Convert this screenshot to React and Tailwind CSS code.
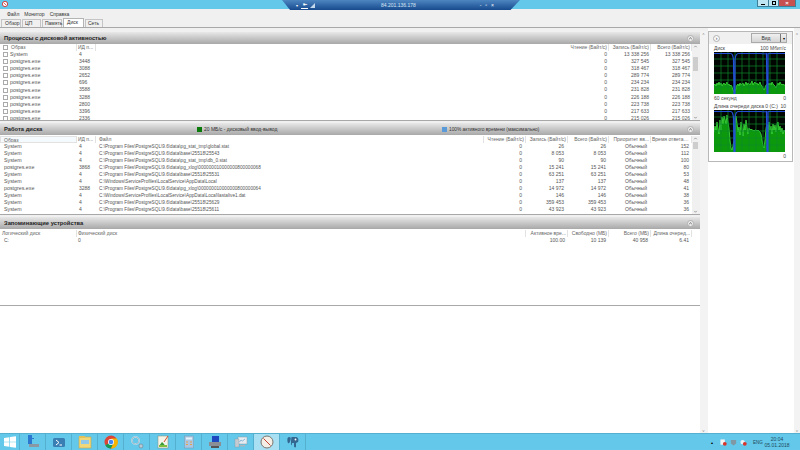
import React from 'react'

const procRows = [
  ['System', '4', '0', '13 338 256', '13 338 256'],
  ['postgres.exe', '3448', '0', '327 545', '327 545'],
  ['postgres.exe', '3088', '0', '318 467', '318 467'],
  ['postgres.exe', '2652', '0', '289 774', '289 774'],
  ['postgres.exe', '696', '0', '234 234', '234 234'],
  ['postgres.exe', '3588', '0', '231 828', '231 828'],
  ['postgres.exe', '3288', '0', '226 188', '226 188'],
  ['postgres.exe', '2800', '0', '223 738', '223 738'],
  ['postgres.exe', '3396', '0', '217 633', '217 633'],
  ['postgres.exe', '2336', '0', '215 026', '215 026'],
]

const diskRows = [
  ['System', '4', 'C:\\Program Files\\PostgreSQL\\9.6\\data\\pg_stat_tmp\\global.stat', '0', '26', '26', '152'],
  ['System', '4', 'C:\\Program Files\\PostgreSQL\\9.6\\data\\base\\25518\\25543', '0', '8 053', '8 053', '112'],
  ['System', '4', 'C:\\Program Files\\PostgreSQL\\9.6\\data\\pg_stat_tmp\\db_0.stat', '0', '90', '90', '100'],
  ['postgres.exe', '3868', 'C:\\Program Files\\PostgreSQL\\9.6\\data\\pg_xlog\\000000010000000800000068', '0', '15 241', '15 241', '80'],
  ['System', '4', 'C:\\Program Files\\PostgreSQL\\9.6\\data\\base\\25518\\25531', '0', '63 251', '63 251', '53'],
  ['System', '4', 'C:\\Windows\\ServiceProfiles\\LocalService\\AppData\\Local', '0', '137', '137', '48'],
  ['postgres.exe', '3288', 'C:\\Program Files\\PostgreSQL\\9.6\\data\\pg_xlog\\000000010000000800000064', '0', '14 972', '14 972', '41'],
  ['System', '4', 'C:\\Windows\\ServiceProfiles\\LocalService\\AppData\\Local\\lastalive1.dat', '0', '146', '146', '38'],
  ['System', '4', 'C:\\Program Files\\PostgreSQL\\9.6\\data\\base\\25518\\25629', '0', '359 453', '359 453', '36'],
  ['System', '4', 'C:\\Program Files\\PostgreSQL\\9.6\\data\\base\\25518\\25611', '0', '43 923', '43 923', '36'],
]

const green1 = [33, 32, 34, 31, 33, 30, 33, 31, 34, 32, 31, 33, 32, 30, 33, 32, 34, 33, 35, 38, 40, 40, 36, 33, 32, 34, 31, 33, 32, 31, 34, 32, 30, 33, 31, 32, 33, 31, 29, 33, 31, 30, 32, 31, 33, 32, 30, 33, 34, 36, 38, 36, 33, 32, 31, 33, 31, 33, 30, 32, 33, 34, 36, 33, 31, 33, 30, 32, 33, 32, 33, 33]
const green2 = [22, 16, 20, 12, 18, 24, 10, 20, 7, 14, 6, 9, 14, 5, 12, 18, 30, 38, 40, 36, 30, 14, 6, 13, 22, 17, 25, 12, 18, 26, 14, 20, 10, 17, 24, 18, 20, 19, 20, 20, 21, 20, 20, 21, 20, 21, 22, 24, 30, 36, 38, 30, 18, 14, 22, 12, 20, 16, 24, 14, 20, 15, 22, 14, 12, 20, 16, 22, 18, 24, 20, 22]

function Graph({ data, className }) {
  const points = data.map((v, i) => `${i},${v}`).join(' ')
  const vLines = [7, 14, 21, 28, 35, 42, 49, 56, 63]
  const hLines = [7, 14, 21, 28, 35]
  return (
    <svg viewBox="0 0 71 42" className={className}>
      <rect width="71" height="42" fill="#020602" />
      <polygon points={`0,42 ${points} 71,42`} fill="#0c9a0c" />
      <polyline points={points} fill="none" stroke="#3fe03f" strokeWidth="0.8" />
      {vLines.map(x => <line key={x} x1={x} y1="0" x2={x} y2="42" stroke="#0c8a2c" strokeWidth="0.7" />)}
      {hLines.map(y => <line key={y} x1="0" y1={y} x2="71" y2={y} stroke="#0c8a2c" strokeWidth="0.7" />)}
      <path d="M0 1.5H17Q19 2 19.5 8L20 42M21 42L21 8Q21.5 2 24 1.5H47Q51 2 52.5 1.5L53 42M54 42L54 1.5H71" fill="none" stroke="#2450d8" strokeWidth="1.2" />
    </svg>
  )
}

function Chevron() {
  return (
    <span className="flex w-[7px] h-[7px] items-center justify-center rounded-full bg-[#ececec] border border-[#b0b0b0]">
      <svg viewBox="0 0 6 6" className="w-[5px] h-[5px]">
        <path d="M1.5 3.6L3 2.2L4.5 3.6" fill="none" stroke="#333" strokeWidth="0.9" />
      </svg>
    </span>
  )
}

function SectionHeader({ title, children }) {
  return (
    <div className="relative flex h-[12px] shrink-0 items-center bg-gradient-to-b from-[#e8e8e8] to-[#a8a8a8] pl-[4px] pr-[6px]">
      <span className="text-[5.8px] font-bold text-[#222]">{title}</span>
      {children}
      <span className="ml-auto"><Chevron /></span>
    </div>
  )
}

function Head({ children, className = '' }) {
  return <div className={`truncate border-r border-[#e2e2e2] px-[1px] ${className}`}>{children}</div>
}

function Scrollbar({ thumb }) {
  return (
    <div className="flex w-[8px] shrink-0 flex-col items-center justify-between bg-[#f0f0f0] pr-[1px]">
      <svg viewBox="0 0 6 5" className="w-[5px] h-[5px]"><path d="M1.5 3.4L3 1.8L4.5 3.4" fill="none" stroke="#666" strokeWidth="0.7" /></svg>
      <div className="w-full flex-1 px-[1px]">
        <div className={`w-full bg-[#cdcdcd] ${thumb}`} />
      </div>
      <svg viewBox="0 0 6 5" className="w-[5px] h-[5px]"><path d="M1.5 1.8L3 3.4L4.5 1.8" fill="none" stroke="#666" strokeWidth="0.7" /></svg>
    </div>
  )
}

function TaskIcon({ children, active }) {
  return (
    <div className={`flex h-full w-[26px] shrink-0 items-center justify-center border-r border-[#55b0d0] ${active ? 'bg-[#a9dff2]' : ''}`}>
      <svg viewBox="0 0 14 14" className="w-[14px] h-[14px]">{children}</svg>
    </div>
  )
}

export default function App() {
  return (
    <div className="flex h-screen w-screen flex-col overflow-hidden bg-white font-['Liberation_Sans',Arial,sans-serif] text-[5px] leading-[7px] text-[#555]">
      {/* заголовок окна */}
      <div className="relative flex h-[9px] shrink-0 items-start bg-[#63c8ea]">
        <svg viewBox="0 0 8 8" className="ml-[2px] mt-[1px] w-[6px] h-[6px]">
          <circle cx="4" cy="4" r="3.5" fill="#fff" stroke="#c33" strokeWidth="1.2" />
          <path d="M2.5 2.5L5.5 5.5" stroke="#c33" />
        </svg>
        <div className="absolute left-[282px] top-0 flex h-[10px] w-[238px] items-center bg-gradient-to-b from-[#4d86c0] to-[#174a8e] pl-[14px] pr-[26px] text-white [clip-path:polygon(0_0,100%_0,96%_100%,3.4%_100%)]">
          <span className="text-[4px]">▾</span>
          <span className="ml-[3px] flex h-[7px] w-[7px] items-center justify-center border-b border-white text-[5px] font-bold">⇤</span>
          <svg viewBox="0 0 6 6" className="ml-[2px] w-[5px] h-[5px]"><path d="M0 6L6 0V6Z" fill="#c4d8ec" /></svg>
          <span className="ml-[66px] text-[#d9e8f6]">84.201.136.178</span>
          <span className="ml-auto flex items-center gap-[4px] text-[5px] leading-none"><span>-</span><span>▫</span><span>×</span></span>
        </div>
        <div className="ml-auto mr-[4px] flex h-[7px] items-stretch border border-t-0 border-[#3c7f98] text-[#111]">
          <div className="flex w-[10px] items-center justify-center bg-[#bfe6f3]"><div className="mt-[2px] h-[1px] w-[4px] bg-black" /></div>
          <div className="flex w-[11px] items-center justify-center border-x border-[#3c7f98] bg-[#bfe6f3]"><div className="h-[4px] w-[4px] border border-black" /></div>
          <div className="flex w-[16px] items-center justify-center bg-[#c75050] text-[6px] font-bold leading-none text-white">×</div>
        </div>
      </div>

      {/* меню */}
      <div className="flex h-[10px] shrink-0 items-center gap-[5px] bg-[#f0f0f0] pl-[7px] text-[#333]">
        <span>Файл</span><span>Монитор</span><span>Справка</span>
      </div>

      {/* вкладки */}
      <div className="flex h-[9px] shrink-0 items-end gap-[1px] border-b border-[#a8a8a8] bg-[#f0f0f0] pl-[1px] text-[#333]">
        <div className="h-[8px] w-[20px] border border-b-0 border-[#c4c4c4] pl-[3px]">Обзор</div>
        <div className="h-[8px] w-[19px] border border-b-0 border-[#c4c4c4] pl-[2px]">ЦП</div>
        <div className="h-[8px] w-[20px] border border-b-0 border-[#c4c4c4] pl-[2px]">Память</div>
        <div className="h-[9px] w-[21px] border border-b-0 border-[#b4b4b4] bg-white pl-[3px]">Диск</div>
        <div className="h-[8px] w-[18px] border border-b-0 border-[#c4c4c4] pl-[2px]">Сеть</div>
      </div>

      <div className="flex min-h-0 flex-1 bg-[#f0f0f0]">
        {/* левая часть */}
        <div className="flex w-[700px] shrink-0 flex-col pt-[4px]">
          <section className="flex h-[89px] shrink-0 flex-col border-b border-[#a8a8a8] bg-white">
            <SectionHeader title="Процессы с дисковой активностью" />
            <div className="flex min-h-0 flex-1">
              <div className="min-w-0 flex-1 overflow-hidden">
                <div className="grid h-[7px] grid-cols-[77px_19px_1fr_42px_42px_41px] text-[#666]">
                  <Head className="flex items-center pl-[3px]"><span className="mr-[3px] inline-block h-[5px] w-[5px] border border-[#aaa]" />Образ</Head>
                  <Head>ИД п...</Head>
                  <div />
                  <Head className="text-right">Чтение (Байт/с)</Head>
                  <Head className="text-right">Запись (Байт/с)</Head>
                  <Head className="text-right">Всего (Байт/с)</Head>
                </div>
                {procRows.map((r, i) => (
                  <div key={i} className="grid h-[7.1px] grid-cols-[77px_19px_1fr_42px_42px_41px]">
                    <div className="flex items-center pl-[3px] text-[5.3px]"><span className="mr-[2px] inline-block h-[5px] w-[5px] border border-[#aaa]" />{r[0]}</div>
                    <div className="pl-[2px]">{r[1]}</div>
                    <div />
                    <div className="pr-[2px] text-right">{r[2]}</div>
                    <div className="pr-[2px] text-right">{r[3]}</div>
                    <div className="pr-[2px] text-right">{r[4]}</div>
                  </div>
                ))}
              </div>
              <Scrollbar thumb="mt-[8px] h-[14px]" />
            </div>
          </section>

          <section className="mt-[2px] flex h-[92px] shrink-0 flex-col border-b border-[#a8a8a8] bg-white">
            <SectionHeader title="Работа диска">
              <span className="absolute left-[197px] top-[3px] flex items-center text-[#333]">
                <span className="mr-[2px] h-[5px] w-[5px] bg-[#0a7a0a]" />20 МБ/с - дисковый ввод-вывод
              </span>
              <span className="absolute left-[442px] top-[3px] flex items-center text-[4.8px] text-[#333]">
                <span className="mr-[2px] h-[5px] w-[5px] bg-[#5a9ad8]" />100% активного времени (максимально)
              </span>
            </SectionHeader>
            <div className="flex min-h-0 flex-1 pt-[1px]">
              <div className="min-w-0 flex-1 overflow-hidden">
                <div className="grid h-[7px] grid-cols-[77px_19px_388px_42px_42px_41px_42px_41px] text-[#666]">
                  <Head className="border border-[#9fd0ec] bg-[#f4fafe] pl-[3px]">Образ</Head>
                  <Head>ИД п...</Head>
                  <Head className="pl-[3px]">Файл</Head>
                  <Head className="text-right">Чтение (Байт/с)</Head>
                  <Head className="text-right">Запись (Байт/с)</Head>
                  <Head className="text-right">Всего (Байт/с)</Head>
                  <Head className="text-right">Приоритет вв...</Head>
                  <Head className="text-right">Время ответа (...</Head>
                </div>
                {diskRows.map((r, i) => (
                  <div key={i} className="grid h-[7.05px] grid-cols-[77px_19px_388px_42px_42px_41px_42px_41px]">
                    <div className="pl-[4px] text-[5.3px]">{r[0]}</div>
                    <div className="pl-[2px]">{r[1]}</div>
                    <div className="pl-[3px] text-[4.7px]">{r[2]}</div>
                    <div className="pr-[4px] text-right">{r[3]}</div>
                    <div className="pr-[4px] text-right">{r[4]}</div>
                    <div className="pr-[3px] text-right">{r[5]}</div>
                    <div className="pr-[4px] text-right">Обычный</div>
                    <div className="pr-[3px] text-right">{r[6]}</div>
                  </div>
                ))}
              </div>
              <Scrollbar thumb="mt-[1px] h-[7px]" />
            </div>
          </section>

          <section className="mt-[2px] flex h-[89px] shrink-0 flex-col border-b border-[#a8a8a8] bg-white">
            <SectionHeader title="Запоминающие устройства" />
            <div className="mt-[1px] grid h-[7px] grid-cols-[77px_449px_42px_41px_42px_41px] text-[#666]">
              <Head className="pl-[2px]">Логический диск</Head>
              <Head>Физический диск</Head>
              <Head className="text-right">Активное вре...</Head>
              <Head className="text-right">Свободно (МБ)</Head>
              <Head className="text-right">Всего (МБ)</Head>
              <Head className="text-right">Длина очеред...</Head>
            </div>
            <div className="grid h-[7px] grid-cols-[77px_449px_42px_41px_42px_41px]">
              <div className="pl-[4px]">C:</div>
              <div className="pl-[1px]">0</div>
              <div className="pr-[3px] text-right">100.00</div>
              <div className="pr-[3px] text-right">10 139</div>
              <div className="pr-[3px] text-right">40 958</div>
              <div className="pr-[3px] text-right">6.41</div>
            </div>
          </section>
          <div className="flex-1 bg-white" />
        </div>

        {/* средняя полоса прокрутки */}
        <div className="flex w-[8px] shrink-0 flex-col pt-[3px]">
          <div className="flex flex-1 flex-col items-center justify-between bg-[#f3f3f3] pr-[1px]">
            <span className="text-[4px] leading-[5px] text-[#888]">˄</span>
            <span className="text-[4px] leading-[5px] text-[#888]">˅</span>
          </div>
        </div>

        {/* правая панель */}
        <div className="flex w-[85px] shrink-0 flex-col bg-white pt-[3px]">
          <div className="flex h-[131px] shrink-0 flex-col border border-[#b8b8b8] bg-white">
            <div className="flex h-[12px] shrink-0 items-center bg-[#f0f0f0] pl-[4px]">
              <span className="flex h-[7px] w-[7px] items-center justify-center rounded-full border border-[#b0b0b0] bg-[#fafafa] text-[5px] leading-none text-[#222]">›</span>
              <div className="ml-[31px] flex h-[10px] w-[36px] border border-[#aaa] bg-gradient-to-b from-[#f0f0f0] to-[#d4d4d4] text-[#333]">
                <span className="flex-1 text-center leading-[9px]">Вид</span>
                <span className="flex w-[6px] items-center justify-center border-l border-[#777] text-[4px] text-black">▾</span>
              </div>
            </div>
            <div className="pl-[5px] pr-[6px] pt-[1px]">
              <div className="flex h-[7px] text-[#444]">
                <span>Диск</span>
                <span className="ml-auto">100 Мбит/с</span>
              </div>
              <Graph data={green1} className="block h-[42px] w-[71px]" />
              <div className="flex h-[7px] justify-between pt-[1px] text-[#444]"><span>60 секунд</span><span>0</span></div>
              <div className="mt-[2px] flex h-[7px] justify-between text-[#444]"><span className="whitespace-nowrap">Длина очереди диска 0 (C:)</span><span>10</span></div>
              <Graph data={green2} className="block h-[42px] w-[71px]" />
              <div className="flex h-[8px] justify-end pt-[1px] text-[#444]"><span>0</span></div>
            </div>
          </div>
          <div className="flex-1 bg-white" />
        </div>

        <div className="w-[1px] shrink-0 bg-white" />
        <div className="flex w-[6px] shrink-0 flex-col pt-[3px]">
          <div className="flex flex-1 flex-col items-center justify-between bg-[#f3f3f3]">
            <span className="text-[4px] leading-[5px] text-[#888]">˄</span>
            <span className="text-[4px] leading-[5px] text-[#888]">˅</span>
          </div>
        </div>
      </div>

      {/* панель задач */}
      <div className="flex h-[17px] shrink-0 items-center border-t border-[#55b0d0] bg-[#63c8ea]">
        <div className="flex h-full w-[20px] shrink-0 items-center justify-center border-r border-[#55b0d0]">
          <svg viewBox="0 0 12 12" className="w-[12px] h-[12px]"><path d="M0 2L5.4 1.2V5.7H0ZM6 1.1L12 0.2V5.7H6ZM0 6.3H5.4V10.8L0 10ZM6 6.3H12V11.8L6 10.9Z" fill="#fff" /></svg>
        </div>
        <TaskIcon>
          <rect x="2" y="0" width="4" height="9" fill="#2b78d0" />
          <rect x="6" y="3" width="2" height="1" fill="#2b78d0" />
          <rect x="3" y="9" width="10" height="3" fill="#8b98a4" />
        </TaskIcon>
        <TaskIcon>
          <rect x="1" y="3" width="12" height="9" rx="1.5" fill="#3a7fb4" />
          <path d="M4 5L7 7.5L4 10" fill="none" stroke="#fff" strokeWidth="1" />
          <path d="M7.5 10H10" stroke="#fff" />
        </TaskIcon>
        <TaskIcon>
          <rect x="1" y="2" width="12" height="11" fill="#f0d77a" stroke="#c9a84a" strokeWidth="0.6" />
          <rect x="1" y="1" width="6" height="2" fill="#e3c25a" />
          <rect x="3" y="5" width="8" height="4" fill="#8fc8e8" />
        </TaskIcon>
        <TaskIcon>
          <circle cx="7" cy="7" r="6.5" fill="#db4437" />
          <path d="M7 7L1.4 10.2A6.5 6.5 0 0 0 7 13.5L10 7Z" fill="#0f9d58" />
          <path d="M7 3.5H12.8A6.5 6.5 0 0 1 7 13.5L10 7Z" fill="#f4b400" />
          <circle cx="7" cy="7" r="3" fill="#fff" />
          <circle cx="7" cy="7" r="2.3" fill="#4285f4" />
        </TaskIcon>
        <TaskIcon>
          <circle cx="5.5" cy="5.5" r="3.6" fill="none" stroke="#dfeaf2" strokeWidth="1.5" />
          <circle cx="5.5" cy="5.5" r="3.6" fill="none" stroke="#6d90a8" strokeWidth="0.5" />
          <circle cx="11" cy="11" r="2" fill="#b8c8d4" stroke="#6d8494" strokeWidth="0.6" />
        </TaskIcon>
        <TaskIcon>
          <rect x="2" y="1" width="10" height="12" fill="#f4f4e8" stroke="#8a8a70" strokeWidth="0.5" />
          <path d="M3 11L6 7L8 9L9 11Z" fill="#3a9a3a" />
          <rect x="3" y="10" width="8" height="2" fill="#7fbf3f" />
          <path d="M8 7L12 1" stroke="#d84a2a" strokeWidth="1" />
        </TaskIcon>
        <TaskIcon>
          <rect x="2.5" y="1" width="9" height="12" fill="#a9c7e2" stroke="#7795b0" strokeWidth="0.5" />
          <rect x="4" y="2.5" width="6" height="2" fill="#e9f1f8" />
          <path d="M4 7H6M8 7H10M4 9.5H6M8 9.5H10" stroke="#e9a04a" strokeWidth="1.1" />
        </TaskIcon>
        <TaskIcon>
          <rect x="4" y="1" width="7" height="6" fill="#1d48c0" />
          <rect x="1" y="7" width="12" height="4" fill="#8a8f96" />
          <rect x="3" y="11" width="8" height="2" fill="#555" />
        </TaskIcon>
        <TaskIcon>
          <rect x="4" y="2" width="9" height="7" fill="#e6edf2" stroke="#8a98a4" strokeWidth="0.5" />
          <path d="M5.5 7L7 5L8.5 6L11 4" fill="none" stroke="#4a90c0" strokeWidth="0.6" />
          <rect x="1" y="4" width="4" height="8" fill="#c4ccd2" stroke="#8a98a4" strokeWidth="0.4" />
          <rect x="6" y="10" width="5" height="1.5" fill="#aab4bc" />
        </TaskIcon>
        <TaskIcon active>
          <circle cx="7" cy="7" r="6" fill="#f4efe6" stroke="#7a7670" strokeWidth="1" />
          <path d="M3.5 3.5L10.5 10.5" stroke="#c8402f" strokeWidth="1" />
        </TaskIcon>
        <TaskIcon>
          <path d="M3 2C1 2 1 6 2 8C3 9 4 7 4.5 5C5 3 5 2 3 2Z" fill="#336791" />
          <path d="M5.5 2H9C12 2 13 4 12 7C11 8 10 7 10 9V12C9 13 8 12 8 11V8H6V10C5 11 5 8 5 6Z" fill="#336791" />
          <circle cx="9.5" cy="4.5" r="0.9" fill="#fff" />
        </TaskIcon>
        <div className="ml-auto flex h-full items-center pr-[13px] text-[#1f4a5c]">
          <span className="mr-[7px] text-[4px] text-black">▴</span>
          <svg viewBox="0 0 8 8" className="mr-[3px] w-[7px] h-[7px]"><rect x="0.5" y="0.5" width="5" height="6" fill="#f4f4f4" /><circle cx="5.5" cy="5.5" r="2.2" fill="#d8342c" /></svg>
          <svg viewBox="0 0 8 8" className="mr-[3px] w-[7px] h-[7px]"><path d="M1 1H7V5L4 7.5L1 5Z" fill="#7f98a4" /></svg>
          <svg viewBox="0 0 8 8" className="mr-[6px] w-[7px] h-[7px]"><circle cx="3" cy="3.5" r="2.5" fill="#e8f2f6" /><circle cx="5.5" cy="5.5" r="2.2" fill="#d8342c" /></svg>
          <span className="mr-[4px] w-[10px] text-[4.5px]">ENG</span>
          <div className="flex w-[20px] flex-col items-center leading-[6px]">
            <span>20:04</span>
            <span className="whitespace-nowrap">05.01.2018</span>
          </div>
        </div>
      </div>
    </div>
  )
}
